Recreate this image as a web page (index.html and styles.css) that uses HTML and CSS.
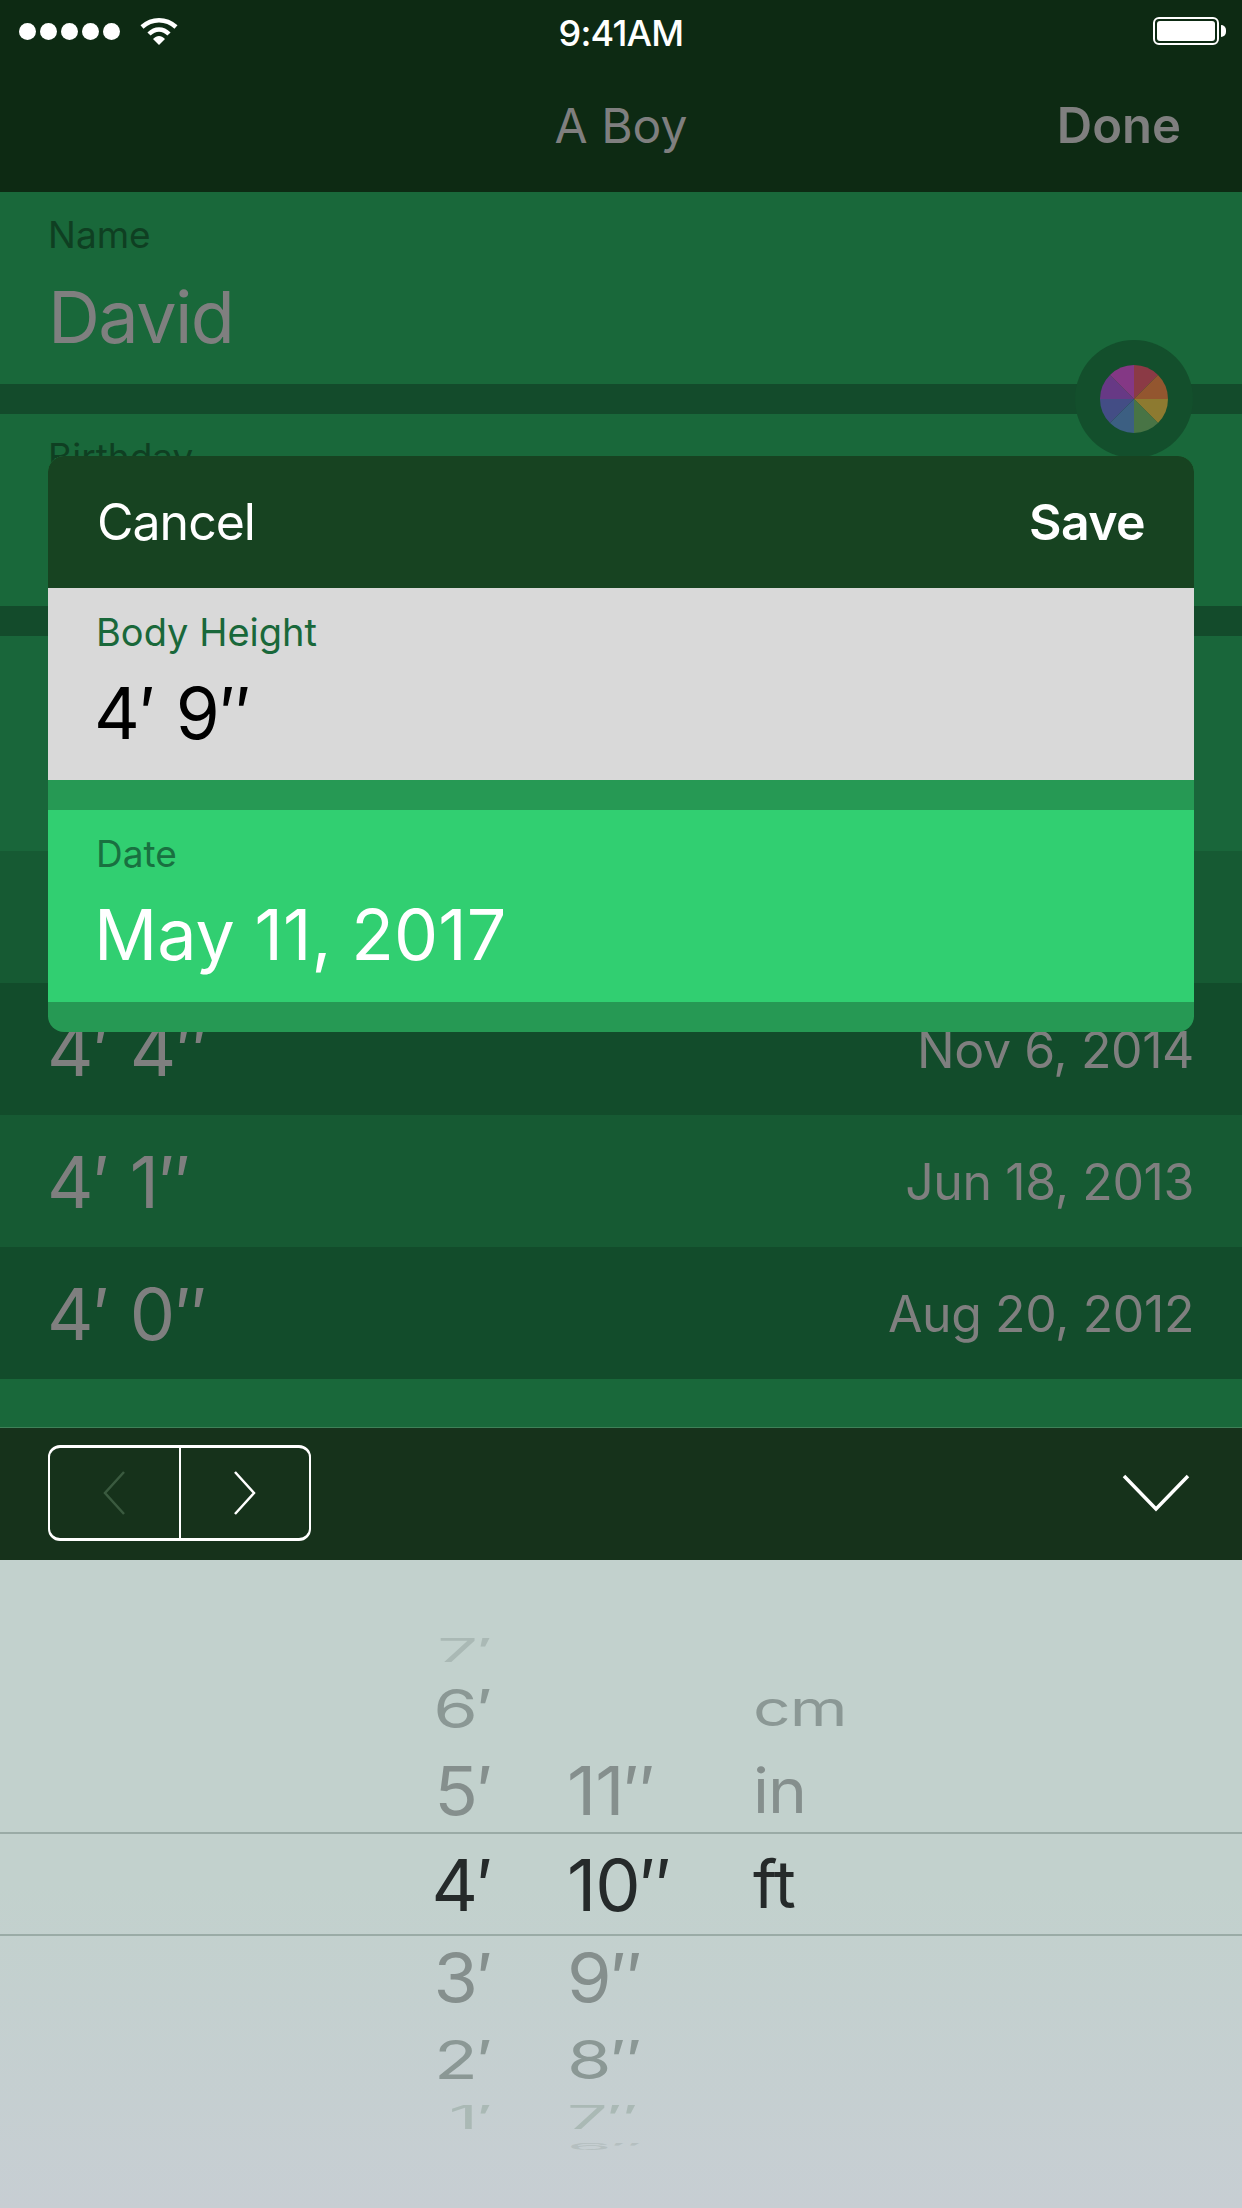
FILE: index.html
```html
<!DOCTYPE html>
<html lang="en">
<head>
    <meta charset="UTF-8">
    <title>A Boy</title>
    <link rel="stylesheet" href="styles.css">
</head>
<body>
<div class="screen">

    <header class="top">
        <div class="status">
            <div class="signal">
                <i></i><i></i><i></i><i></i><i></i>
                <svg class="wifi" width="38" height="28" viewBox="0 0 38 28">
                    <path d="M2 10 C12 1 26 1 36 10" fill="none" stroke="#fff" stroke-width="4.5"/>
                    <path d="M9 17 C15 11 23 11 29 17" fill="none" stroke="#fff" stroke-width="4.5"/>
                    <path d="M13 22 C17 18 21 18 25 22 L19 28 Z" fill="#fff"/>
                </svg>
            </div>
            <span class="clock">9:41AM</span>
            <div class="battery"><b></b></div>
        </div>
        <nav class="navbar">
            <span class="nav-title">A Boy</span>
            <span class="nav-done">Done</span>
        </nav>
    </header>

    <section class="field">
        <label>Name</label>
        <p>David</p>
    </section>
    <div class="gap"></div>
    <section class="field">
        <label>Birthday</label>
    </section>
    <div class="gap"></div>

    <div class="row tall"></div>
    <div class="row mid"></div>
    <div class="row dark"><span class="h">4′ 4″</span><span class="d">Nov 6, 2014</span></div>
    <div class="row mid"><span class="h">4′ 1″</span><span class="d">Jun 18, 2013</span></div>
    <div class="row dark"><span class="h">4′ 0″</span><span class="d">Aug 20, 2012</span></div>
    <div class="list-end"></div>

    <div class="toolbar">
        <div class="stepper">
            <div class="step">
                <svg width="24" height="44" viewBox="0 0 24 44"><path d="M22 1 L3 22 L22 43" fill="none" stroke="#3a5a3f" stroke-width="2.5"/></svg>
            </div>
            <div class="step">
                <svg width="24" height="44" viewBox="0 0 24 44"><path d="M2 1 L21 22 L2 43" fill="none" stroke="#fff" stroke-width="2.5"/></svg>
            </div>
        </div>
        <svg class="collapse" width="68" height="38" viewBox="0 0 68 38"><path d="M2 2 L34 35 L66 2" fill="none" stroke="#fff" stroke-width="3.5"/></svg>
    </div>

    <div class="wheel">
        <div class="w-row r7"><span>7′</span><span></span><span></span></div>
        <div class="w-row r6"><span>6′</span><span></span><span>cm</span></div>
        <div class="w-row r5"><span>5′</span><span>11″</span><span>in</span></div>
        <div class="w-row sel"><span>4′</span><span>10″</span><span>ft</span></div>
        <div class="w-row r3"><span>3′</span><span>9″</span><span></span></div>
        <div class="w-row r2"><span>2′</span><span>8″</span><span></span></div>
        <div class="w-row r1"><span>1′</span><span>7″</span><span></span></div>
        <div class="w-row r0"><span></span><span>6″</span><span></span></div>
    </div>

    <!-- colour picker button sits over the rows -->
    <div class="swatch">
        <svg width="68" height="68" viewBox="0 0 70 70">
            <path d="M35 35 L35 0 A35 35 0 0 1 59.7 10.3 Z" fill="#8b3a45"/>
            <path d="M35 35 L59.7 10.3 A35 35 0 0 1 70 35 Z" fill="#93562f"/>
            <path d="M35 35 L70 35 A35 35 0 0 1 59.7 59.7 Z" fill="#8d7a30"/>
            <path d="M35 35 L59.7 59.7 A35 35 0 0 1 35 70 Z" fill="#487445"/>
            <path d="M35 35 L35 70 A35 35 0 0 1 10.3 59.7 Z" fill="#3c5f82"/>
            <path d="M35 35 L10.3 59.7 A35 35 0 0 1 0 35 Z" fill="#434d85"/>
            <path d="M35 35 L0 35 A35 35 0 0 1 10.3 10.3 Z" fill="#673985"/>
            <path d="M35 35 L10.3 10.3 A35 35 0 0 1 35 0 Z" fill="#843885"/>
        </svg>
    </div>

    <div class="modal">
        <div class="modal-head">
            <span>Cancel</span>
            <strong>Save</strong>
        </div>
        <div class="modal-field height">
            <label>Body Height</label>
            <p>4′ 9″</p>
        </div>
        <div class="modal-field date">
            <label>Date</label>
            <p>May 11, 2017</p>
        </div>
    </div>

</div>
</body>
</html>
```

FILE: styles.css
```css
* {
    box-sizing: border-box;
}

body {
    margin: 0;
    font-family: Inter, 'Noto Sans', sans-serif;
    background: #19683a;
}

.screen {
    position: relative;
    width: 1242px;
    height: 2208px;
    overflow: hidden;
    background: #19683a;
}

p {
    margin: 0;
}

/* top bar */
.top {
    height: 192px;
    background: #0d2a13;
}

.status {
    height: 62px;
    padding: 0 16px 0 19px;
    display: flex;
    align-items: center;
    justify-content: space-between;
    position: relative;
}

.signal {
    display: flex;
    align-items: center;
    gap: 4px;
}

.signal i {
    width: 17px;
    height: 17px;
    border-radius: 50%;
    background: #fff;
}

.wifi {
    margin-left: 16px;
}

.clock {
    position: absolute;
    left: 0;
    right: 0;
    top: 11px;
    text-align: center;
    color: #fff;
    font-size: 36px;
    font-weight: 500;
    letter-spacing: -0.8px;
}

.battery {
    width: 66px;
    height: 28px;
    border: 2px solid #fff;
    border-radius: 6px;
    padding: 2px;
    position: relative;
    margin-right: 7px;
}

.battery b {
    display: block;
    height: 100%;
    background: #fff;
    border-radius: 3px;
}

.battery::after {
    content: "";
    position: absolute;
    right: -9px;
    top: 6px;
    width: 5px;
    height: 12px;
    background: #fff;
    border-radius: 0 6px 6px 0;
}

.navbar {
    height: 130px;
    position: relative;
    color: #7f7f7f;
    font-size: 48px;
    line-height: 58px;
    padding: 35px 61px 0;
    display: flex;
    justify-content: flex-end;
}

.nav-title {
    position: absolute;
    left: 0;
    right: 0;
    text-align: center;
}

.nav-done {
    font-weight: 600;
    font-size: 49px;
}

/* fields */
.field {
    height: 192px;
    padding: 21px 48px 0;
}

.field label {
    display: block;
    font-size: 37px;
    line-height: 44px;
    color: #0f3f22;
}

.field p {
    font-size: 72px;
    line-height: 90px;
    margin-top: 15px;
    letter-spacing: -1.6px;
    color: #7f7f7f;
}

.gap {
    height: 30px;
    background: #134b2b;
}

/* history rows */
.row {
    height: 132px;
    padding: 0 48px 0 47px;
    display: flex;
    justify-content: space-between;
    align-items: center;
    color: #7f7f7f;
}

.tall {
    height: 215px;
    background: #19663a;
}

.mid {
    background: #165a33;
}

.dark {
    background: #124c2b;
}

.h {
    font-size: 72px;
}

.d {
    font-size: 50px;
    letter-spacing: -0.4px;
    padding-top: 2px;
}

.list-end {
    height: 48px;
}

/* keyboard toolbar */
.toolbar {
    height: 133px;
    background: #16321b;
    border-top: 1px solid #3f8058;
    padding: 17px 52px 0 48px;
    display: flex;
    justify-content: space-between;
    align-items: flex-start;
}

.stepper {
    width: 263px;
    height: 96px;
    border: 2px solid #fff;
    border-top-width: 3px;
    border-bottom-width: 3px;
    border-radius: 12px;
    display: flex;
}

.step {
    flex: 1;
    display: flex;
    align-items: center;
    justify-content: center;
}

.step + .step {
    border-left: 2px solid #fff;
}

.collapse {
    margin-top: 29px;
}

/* picker */
.wheel {
    height: 648px;
    padding-top: 72px;
    background: linear-gradient(#c2d1cd, #c2d1cd 50%, #c7ced3);
}

.w-row {
    display: grid;
    grid-template-columns: 492px 75px 186px auto;
    grid-template-rows: 100%;
    font-size: 72px;
    letter-spacing: -1px;
    align-items: center;
    color: #858f8d;
}

.w-row span:nth-child(1) {
    grid-column: 1;
    text-align: right;
}

.w-row span:nth-child(2) {
    grid-column: 3;
}

.w-row span:nth-child(3) {
    grid-column: 4;
    font-size: 66px;
}

.r7 { height: 36px; transform: scaleY(0.45); color: #aab9b5; }
.r6 { height: 80px; transform: scaleY(0.75); color: #8b9895; }
.r5 { height: 84px; transform: scaleY(0.94); }
.sel { height: 104px; color: #252a2a; border-top: 2px solid #9aaba6; border-bottom: 2px solid #9aaba6; }
.r3 { height: 82px; transform: scaleY(0.94); }
.r2 { height: 82px; transform: scaleY(0.75); color: #8b9895; }
.r1 { height: 34px; transform: scaleY(0.45); color: #aab9b5; }
.r0 { height: 24px; transform: scaleY(0.13); color: #b5bfc0; }

/* overlays */
.swatch {
    position: absolute;
    left: 1075px;
    top: 340px;
    width: 118px;
    height: 118px;
    border-radius: 50%;
    background: #134f2c;
    display: flex;
    align-items: center;
    justify-content: center;
}

.swatch svg {
    display: block;
}

.modal {
    position: absolute;
    left: 48px;
    top: 456px;
    width: 1146px;
    height: 576px;
    background: #269954;
    border-radius: 16px;
    overflow: hidden;
}

.modal-head {
    height: 132px;
    background: #174321;
    color: #fff;
    font-size: 50px;
    letter-spacing: -1px;
    padding: 0 49px;
    display: flex;
    align-items: center;
    justify-content: space-between;
}

.modal-head strong {
    font-weight: 600;
    letter-spacing: -0.6px;
}

.modal-field {
    height: 192px;
    padding: 22px 49px 0 48px;
    margin-bottom: 30px;
}

.modal-field label {
    display: block;
    font-size: 37px;
    line-height: 44px;
}

.height label {
    font-size: 38px;
}

.modal-field p {
    font-size: 71px;
    line-height: 90px;
    margin: 14px 0 0 -2px;
}

.date p {
    font-size: 70px;
}

.height {
    background: #d9d9d9;
    color: #000;
}

.height label {
    color: #19683a;
}

.date {
    background: #31cf71;
    color: #fff;
}

.date label {
    color: #197040;
}
```
